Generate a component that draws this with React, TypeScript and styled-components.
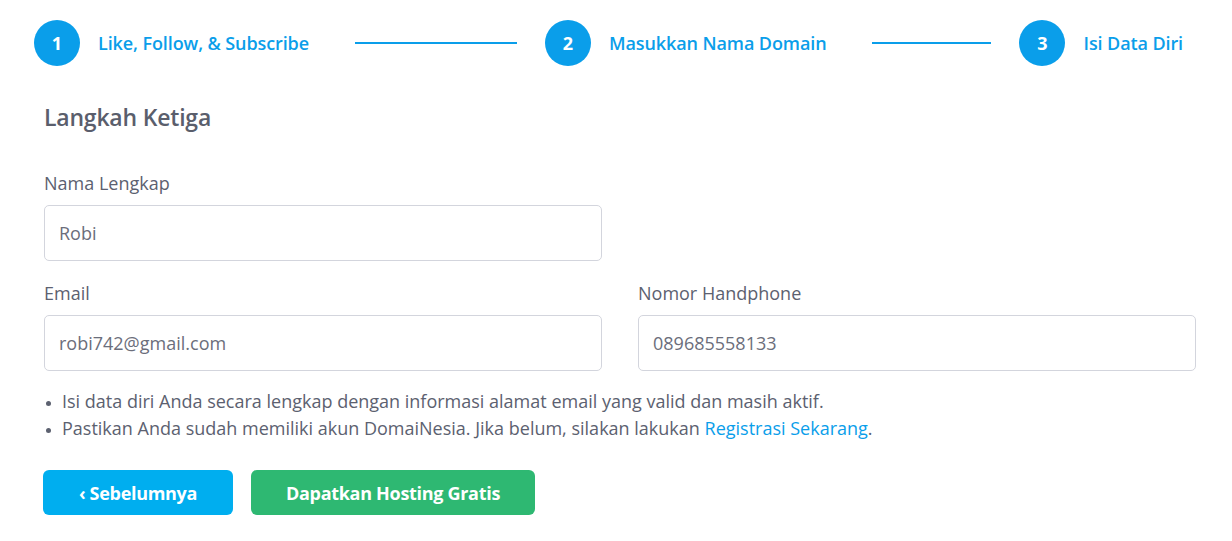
import { createGlobalStyle, styled } from 'styled-components';

const GlobalStyle = createGlobalStyle`
  html, body {
    margin: 0;
    padding: 0;
    background: #ffffff;
  }
  body {
    font-family: "Open Sans", Lato, sans-serif;
    color: #5c6170;
  }
  * {
    box-sizing: border-box;
  }
`;

const Page = styled.div`
  width: 1232px;
  padding: 20px 0 0 34px;
`;

const Stepper = styled.div`
  display: flex;
  align-items: center;
  height: 46px;
`;

const Step = styled.div`
  display: flex;
  align-items: center;
  gap: 18px;
  flex: none;
`;

const StepCircle = styled.span`
  width: 46px;
  height: 46px;
  border-radius: 50%;
  background: #0a9eea;
  color: #ffffff;
  display: inline-flex;
  align-items: center;
  justify-content: center;
  font-weight: 700;
  font-size: 18px;
`;

const StepLabel = styled.span`
  color: #0a9eea;
  font-weight: 600;
  font-size: 18px;
  letter-spacing: -0.1px;
`;

const Connector = styled.span<{ $before: number; $width: number }>`
  flex: none;
  width: ${({ $width }) => $width}px;
  height: 2px;
  background: #0a9eea;
  margin: 0 28px 0 ${({ $before }) => $before}px;
`;

const Form = styled.div`
  padding: 36px 0 0 10px;
  width: 1162px;
`;

const Heading = styled.h2`
  margin: 0 0 41px;
  font-size: 23px;
  font-weight: 600;
  color: #5a5e6c;
  line-height: 30px;
  letter-spacing: -0.2px;
`;

const Grid = styled.div`
  display: grid;
  grid-template-columns: 558px 558px;
  column-gap: 36px;
  row-gap: 22px;
`;

const Field = styled.label`
  display: flex;
  flex-direction: column;
  gap: 12px;
`;

const FieldLabel = styled.span`
  font-size: 18px;
  line-height: 20px;
  color: #5c6170;
`;

const Input = styled.input`
  width: 100%;
  height: 56px;
  border: 1px solid #d3d5dd;
  border-radius: 5px;
  padding: 0 14px;
  font-family: inherit;
  font-size: 18px;
  color: #6b6e7b;
  background: #ffffff;
  outline: none;
`;

const Notes = styled.ul`
  margin: 17px 0 0;
  padding: 0 0 0 18px;
  font-size: 18px;
  line-height: 27px;
  color: #5c6170;

  li::marker {
    font-size: 13px;
  }
`;

const Link = styled.a`
  color: #0a9eea;
  text-decoration: none;
`;

const Actions = styled.div`
  display: flex;
  gap: 18px;
  margin-top: 28px;
  margin-left: -1px;
`;

const Button = styled.button<{ $variant: 'blue' | 'green' }>`
  height: 45px;
  border: none;
  border-radius: 6px;
  background: ${({ $variant }) => ($variant === 'blue' ? '#00aeef' : '#2eb872')};
  color: #ffffff;
  font-family: inherit;
  font-weight: 700;
  font-size: 18px;
  letter-spacing: -0.3px;
  padding: 0;
  width: ${({ $variant }) => ($variant === 'blue' ? '190px' : '284px')};
  cursor: pointer;
`;

export default function App() {
  return (
    <Page>
      <GlobalStyle />
      <Stepper>
        <Step>
          <StepCircle>1</StepCircle>
          <StepLabel>Like, Follow, &amp; Subscribe</StepLabel>
        </Step>
        <Connector $before={46} $width={162} />
        <Step>
          <StepCircle>2</StepCircle>
          <StepLabel>Masukkan Nama Domain</StepLabel>
        </Step>
        <Connector $before={46} $width={119} />
        <Step>
          <StepCircle>3</StepCircle>
          <StepLabel>Isi Data Diri</StepLabel>
        </Step>
      </Stepper>
      <Form>
        <Heading>Langkah Ketiga</Heading>
        <Grid>
          <Field>
            <FieldLabel>Nama Lengkap</FieldLabel>
            <Input defaultValue="Robi" />
          </Field>
          <div />
          <Field>
            <FieldLabel>Email</FieldLabel>
            <Input defaultValue="robi742@gmail.com" />
          </Field>
          <Field>
            <FieldLabel>Nomor Handphone</FieldLabel>
            <Input defaultValue="089685558133" />
          </Field>
        </Grid>
        <Notes>
          <li>Isi data diri Anda secara lengkap dengan informasi alamat email yang valid dan masih aktif.</li>
          <li>
            Pastikan Anda sudah memiliki akun DomaiNesia. Jika belum, silakan lakukan{' '}
            <Link href="#">Registrasi Sekarang</Link>.
          </li>
        </Notes>
        <Actions>
          <Button type="button" $variant="blue">‹ Sebelumnya</Button>
          <Button type="button" $variant="green">Dapatkan Hosting Gratis</Button>
        </Actions>
      </Form>
    </Page>
  );
}
